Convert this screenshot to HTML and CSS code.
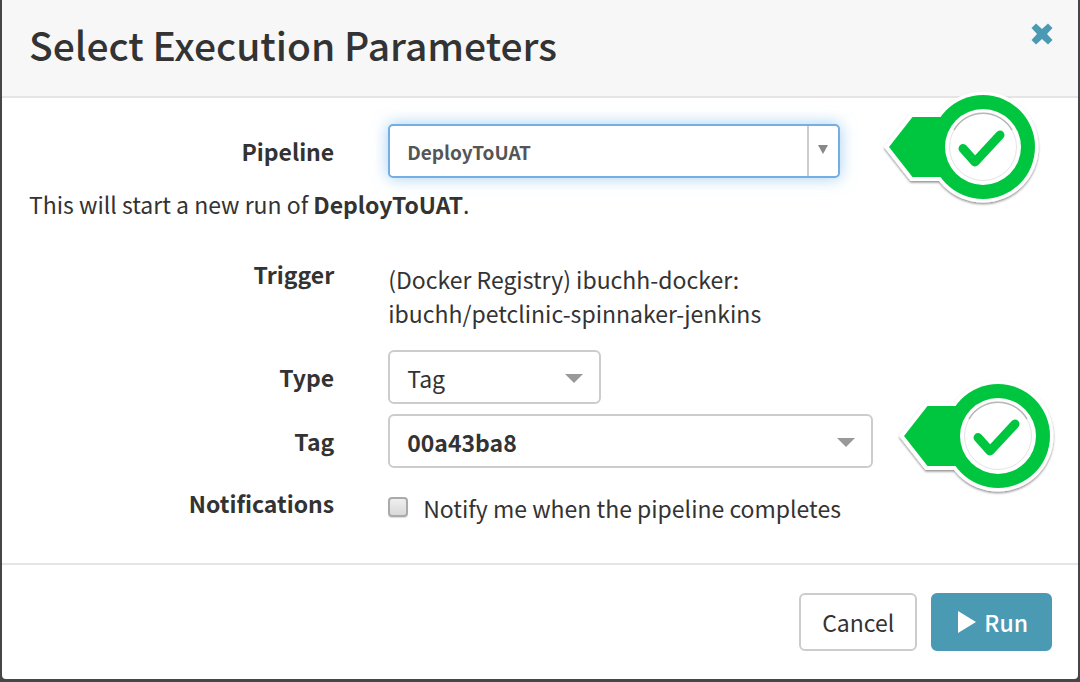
FILE: index.html
```html
<!DOCTYPE html>
<html lang="en">
<head>
<meta charset="utf-8">
<title>Select Execution Parameters</title>
<link rel="stylesheet" href="styles.css">
</head>
<body>
<svg class="defs" aria-hidden="true">
  <defs>
    <filter id="drop" x="-10%" y="-10%" width="120%" height="120%">
      <feDropShadow dx="0" dy="1.5" stdDeviation="1" flood-color="#000" flood-opacity="0.45"/>
    </filter>
    <symbol id="check-marker" viewBox="0 0 160 116">
      <g filter="url(#drop)">
        <path d="M6 56 29.5 26H100V86H29.5Z" fill="#fff" stroke="#fff" stroke-width="8"/>
        <circle cx="100" cy="56" r="55.5" fill="#fff"/>
      </g>
      <path d="M6 56 29.5 26H100V86H29.5Z" fill="#00c63f"/>
      <circle cx="100" cy="56" r="52" fill="#00c63f"/>
      <circle cx="100" cy="56" r="38" fill="#fff"/>
      <circle cx="100" cy="56" r="33.5" fill="none" stroke="#e4e4e4"/>
      <path d="M71 39A33.5 33.5 0 0 1 129 39" fill="none" stroke="#b8b8b8" stroke-width="1.5"/>
      <path d="M80 57.500 92 71 117 44" fill="none" stroke="#00c63f" stroke-width="9" stroke-linecap="round" stroke-linejoin="round"/>
    </symbol>
  </defs>
</svg>
<form class="dialog" role="dialog" aria-labelledby="dialog-title">
  <header class="dialog-header">
    <h1 class="dialog-title" id="dialog-title">Select Execution Parameters</h1>
    <button class="close" type="button" aria-label="Close">
      <svg class="close-icon" viewBox="0 0 22 22"><path d="M5 0.500 11 6 17 0.500 21.500 5 16 11 21.500 17 17 21.500 11 16 5 21.500 0.500 17 6 11 0.500 5Z" fill="#4a9ab4"/></svg>
    </button>
  </header>
  <div class="dialog-body">
    <div class="row">
      <label class="label" for="pipeline">Pipeline</label>
      <div class="picker picker-pipeline">
        <select class="select select-active" id="pipeline"><option>DeployToUAT</option></select>
      </div>
    </div>
    <p class="summary">This will start a new run of <strong>DeployToUAT</strong>.</p>
    <div class="row row-top row-trigger">
      <span class="label">Trigger</span>
      <p class="value">(Docker Registry) ibuchh-docker:<br>ibuchh/petclinic-spinnaker-jenkins</p>
    </div>
    <div class="row">
      <label class="label" for="type">Type</label>
      <div class="picker picker-type">
        <select class="select" id="type"><option>Tag</option></select>
      </div>
    </div>
    <div class="row row-tag">
      <label class="label" for="tag">Tag</label>
      <div class="picker picker-tag">
        <select class="select select-strong" id="tag"><option>00a43ba8</option></select>
      </div>
    </div>
    <div class="row row-top row-notify">
      <span class="label">Notifications</span>
      <label class="value check"><input class="checkbox" type="checkbox">Notify me when the pipeline completes</label>
    </div>
  </div>
  <footer class="dialog-footer">
    <button class="button" type="button">Cancel</button>
    <button class="button button-primary" type="submit">
      <svg class="play-icon" viewBox="0 0 18 22"><path d="M0 0 18 11 0 22Z" fill="#fff"/></svg>Run
    </button>
  </footer>
  <svg class="marker marker-pipeline" aria-hidden="true"><use href="#check-marker"/></svg>
  <svg class="marker marker-tag" aria-hidden="true"><use href="#check-marker"/></svg>
</form>
</body>
</html>
```
FILE: styles.css
```css
* { box-sizing: border-box; }

body {
  margin: 0;
  padding: 0 2px 2px;
  background: #444647;
  color: #333;
  font: 23px/34px "Noto Sans CJK SC", "Noto Sans", sans-serif;
}

.defs { position: absolute; width: 0; height: 0; }

.dialog {
  position: relative;
  background: #fff;
  border-radius: 0 0 4px 4px;
  overflow: hidden;
}

.dialog-header {
  display: flex;
  justify-content: space-between;
  align-items: flex-start;
  padding: 16px 25px 24px 27px;
  background: #f7f7f7;
  border-bottom: 2px solid #e5e5e5;
}

.dialog-title {
  margin: 0;
  font-size: 39px;
  line-height: 56px;
  font-weight: 500;
}

.close {
  display: flex;
  margin: 7px 0 0;
  padding: 0;
  border: 0;
  background: none;
}

.close-icon { width: 22px; height: 22px; }

.dialog-body { padding: 26px 26px 38px 27px; }

.row {
  display: grid;
  grid-template-columns: 315fr 685fr;
  column-gap: 54px;
  align-items: center;
}

.row-top { align-items: start; }
.row-trigger { margin-bottom: 20px; }
.row-tag { margin-top: 10px; }
.row-notify { margin-top: 18px; }

.label { font-weight: 700; text-align: right; }

.summary { margin: 9px 0 36px; }

.value { margin: 0; padding-top: 5px; }

.picker { position: relative; }
.picker-pipeline { width: 68%; }
.picker-type { width: 32%; }
.picker-tag { width: 73%; }

.picker::after {
  content: "";
  position: absolute;
  top: 24px;
  right: 18px;
  border: solid transparent;
  border-width: 9px 9px 0;
  border-top-color: #999;
  pointer-events: none;
}

.picker-pipeline::after {
  top: 21px;
  right: 12px;
  border-width: 9px 5px 0;
  border-top-color: #888;
}

.picker-pipeline::before {
  content: "";
  position: absolute;
  top: 2px;
  bottom: 2px;
  right: 31px;
  border-left: 2px solid #ccc;
}

.select {
  display: block;
  width: 100%;
  height: 54px;
  padding: 2px 17px 0;
  border: 2px solid #ccc;
  border-radius: 6px;
  background: #fff;
  color: inherit;
  font: inherit;
  appearance: none;
}

.select-strong { font-weight: 700; }

.select-active {
  border-color: #74aee3;
  border-radius: 5px;
  box-shadow: 0 0 16px rgba(102, 175, 233, 0.6);
  color: #555;
  font-size: 19px;
  font-weight: 700;
}

.check { display: flex; align-items: center; }

.checkbox {
  width: 20px;
  height: 20px;
  margin: 0 15px 3px 0;
  border: 2px solid #aaa;
  border-radius: 4px;
  background: linear-gradient(#efefef, #d9d9d9);
  box-shadow: 0 1px 1px #ddd;
  appearance: none;
}

.dialog-footer {
  display: flex;
  justify-content: flex-end;
  gap: 14px;
  padding: 28px 26px;
  border-top: 2px solid #e5e5e5;
}

.button {
  display: flex;
  align-items: center;
  padding: 10px 21px;
  border: 2px solid #ccc;
  border-radius: 6px;
  background: #fff;
  color: #333;
  font: inherit;
}

.button-primary {
  gap: 8px;
  padding: 10px 22px 10px 25px;
  border-color: #4a9ab4;
  background: #4a9ab4;
  color: #fff;
  font-weight: 500;
}

.play-icon { width: 18px; height: 22px; }

.marker {
  position: absolute;
  width: 160px;
  height: 116px;
  overflow: visible;
  pointer-events: none;
}

.marker-pipeline { top: 91px; right: 35px; }
.marker-tag { top: 380px; right: 20px; }
```
